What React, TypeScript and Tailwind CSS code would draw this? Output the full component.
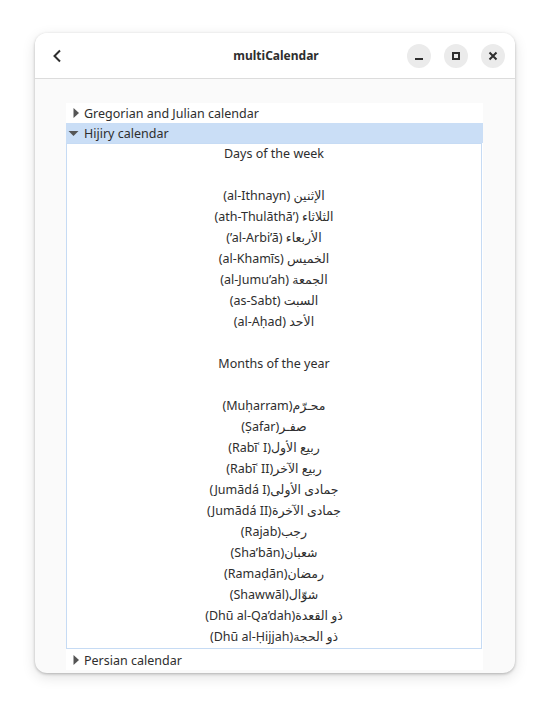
import React from "react";

const FONT = { fontFamily: '"Noto Sans", "DejaVu Sans", sans-serif' };

const DAYS = [
  "(al-Ithnayn) الإثنين",
  "(ath-Thulāthā’) الثلاثاء",
  "(’al-Arbi’ā) الأربعاء",
  "(al-Khamīs) الخميس",
  "(al-Jumu’ah) الجمعة",
  "(as-Sabt) السبت",
  "(al-Aḥad) الأحد",
];

const MONTHS = [
  "(Muḥarram)محـرّم",
  "(Ṣafar)صفـر",
  "(Rabīʿ I)ربيع الأول",
  "(Rabīʿ II)ربيع الآخر",
  "(Jumādá I)جمادى الأولى",
  "(Jumādá II)جمادى الآخرة",
  "(Rajab)رجب",
  "(Sha’bān)شعبان",
  "(Ramaḍān)رمضان",
  "(Shawwāl)شوّال",
  "(Dhū al-Qa’dah)ذو القعدة",
  "(Dhū al-Ḥijjah)ذو الحجة",
];

function Arrow({ open }: { open?: boolean }) {
  return open ? (
    <svg width="11" height="10" viewBox="0 0 11 10" className="shrink-0">
      <path d="M0.5 3 L10.5 3 L5.5 8 Z" fill="#555" />
    </svg>
  ) : (
    <svg width="11" height="10" viewBox="0 0 11 10" className="shrink-0">
      <path d="M5.5 0 L11 5 L5.5 10 Z" fill="#555" />
    </svg>
  );
}

function Row({ label, open }: { label: string; open?: boolean }) {
  return (
    <div
      className={`flex h-5 items-center gap-[5px] pl-[2px] text-[12.5px] text-[#2e2e2e] ${
        open ? "bg-[#cadef6]" : "bg-white"
      }`}
    >
      <Arrow open={open} />
      <span className="pt-[2px]">{label}</span>
    </div>
  );
}

function Line({ text }: { text: string }) {
  return (
    <p dir="ltr" className="h-[21px] leading-[19px]">
      {text}
    </p>
  );
}

function WinButton({ children }: { children: React.ReactNode }) {
  return (
    <button className="flex h-6 w-6 items-center justify-center rounded-full bg-[#ebebeb]">
      {children}
    </button>
  );
}

export default function App() {
  return (
    <div className="h-[712px] w-[554px] bg-white pl-[35px] pt-[33px]" style={FONT}>
      <div className="flex h-[640px] w-[480px] flex-col overflow-hidden rounded-xl bg-[#fafafa] shadow-[0_1px_3px_rgba(0,0,0,0.25),0_4px_14px_rgba(0,0,0,0.12)]">
        <header className="grid h-[46px] shrink-0 grid-cols-[1fr_auto_1fr] items-center border-b border-[#dcdcdc] bg-white pl-[15px] pr-[10px]">
          <svg width="16" height="16" viewBox="0 0 16 16" className="shrink-0">
            <path d="M10 2.5 L4.5 8 L10 13.5" fill="none" stroke="#2e2e2e" strokeWidth="2" />
          </svg>
          <h1 className="pr-[3px] text-center text-[12px] font-bold text-[#2e2e2e]">multiCalendar</h1>
          <div className="flex justify-end gap-[13px]">
            <WinButton>
              <span className="mt-[6px] h-[2px] w-[8px] bg-[#2e2e2e]" />
            </WinButton>
            <WinButton>
              <span className="h-[8px] w-[8px] border-2 border-[#2e2e2e]" />
            </WinButton>
            <WinButton>
              <svg width="10" height="10" viewBox="0 0 10 10">
                <path d="M1.5 1.5 L8.5 8.5 M8.5 1.5 L1.5 8.5" stroke="#2e2e2e" strokeWidth="2" />
              </svg>
            </WinButton>
          </div>
        </header>
        <div className="flex-1 overflow-hidden pl-[31px] pr-[32px] pt-[24px]">
          <div className="bg-white">
            <Row label="Gregorian and Julian calendar" />
            <Row label="Hijiry calendar" open />
            <div className="mr-px border border-[#c6dbf4] text-center text-[12.5px] text-[#2e2e2e]">
              <Line text="Days of the week" />
              <Line text="" />
              {DAYS.map((d) => (
                <Line key={d} text={d} />
              ))}
              <Line text="" />
              <Line text="Months of the year" />
              <Line text="" />
              {MONTHS.map((m) => (
                <Line key={m} text={m} />
              ))}
            </div>
            <div className="pt-px">
              <Row label="Persian calendar" />
            </div>
          </div>
        </div>
      </div>
    </div>
  );
}
